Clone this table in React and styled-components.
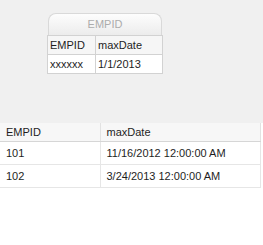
import React from "react";
import styled, { createGlobalStyle } from "styled-components";

const sample = [{ id: "xxxxxx", date: "1/1/2013" }];

const results = [
  { id: "101", date: "11/16/2012 12:00:00 AM" },
  { id: "102", date: "3/24/2013 12:00:00 AM" },
];

const App = () => {
  return (
    <>
      <GlobalStyle />
      <Designer>
        <Card>
          <CardTitle>EMPID</CardTitle>
          <CardTable>
            <thead>
              <tr>
                <CardHead>EMPID</CardHead>
                <CardHead>maxDate</CardHead>
              </tr>
            </thead>
            <tbody>
              {sample.map((row) => (
                <tr key={row.id}>
                  <CardCell>{row.id}</CardCell>
                  <CardCell>{row.date}</CardCell>
                </tr>
              ))}
            </tbody>
          </CardTable>
        </Card>
      </Designer>
      <Grid>
        <thead>
          <tr>
            <GridHead $width={100}>EMPID</GridHead>
            <GridHead>maxDate</GridHead>
          </tr>
        </thead>
        <tbody>
          {results.map((row) => (
            <tr key={row.id}>
              <GridCell>{row.id}</GridCell>
              <GridCell>{row.date}</GridCell>
            </tr>
          ))}
        </tbody>
      </Grid>
    </>
  );
};

const GlobalStyle = createGlobalStyle`
  body {
    margin: 0;
    background: #fff;
    font-family: "Liberation Sans", Arial, sans-serif;
    font-size: 11px;
    color: #1e1e1e;
  }
`;

const Designer = styled.div`
  height: 123px;
  box-sizing: border-box;
  padding: 13px 0 0 47px;
  background: #f0f0f0;
`;

const Card = styled.div`
  width: 116px;
  display: flex;
  flex-direction: column;
`;

const CardTitle = styled.div`
  margin: 0 1px;
  height: 21px;
  line-height: 21px;
  text-align: center;
  color: #acacac;
  border: 1px solid #d9d9d9;
  border-bottom: none;
  border-radius: 8px 8px 0 0;
  background: linear-gradient(#fdfdfd, #ececec);
`;

const CardTable = styled.table`
  width: 116px;
  border-collapse: collapse;
  background: #fff;
  border: 1px solid #d2d2d2;
`;

const CardHead = styled.th`
  height: 18px;
  padding: 0 2px;
  text-align: left;
  font-weight: normal;
  background: #f6f6f6;
  border: 1px solid #d2d2d2;
  &:first-child {
    width: 43px;
  }
`;

const CardCell = styled.td`
  height: 18px;
  padding: 0 2px;
  border: 1px solid #d2d2d2;
`;

const Grid = styled.table`
  width: 261px;
  border-collapse: collapse;
  border-right: 1px solid #e2e2e2;
`;

const GridHead = styled.th`
  width: ${(p) => (p.$width ? `${p.$width}px` : "auto")};
  height: 18px;
  padding: 0 6px;
  box-sizing: border-box;
  text-align: left;
  font-weight: normal;
  background: #f7f7f7;
  border-bottom: 1px solid #d6d6d6;
  border-right: 1px solid #e2e2e2;
`;

const GridCell = styled.td`
  height: 22px;
  padding: 0 6px;
  border-bottom: 1px solid #e6e6e6;
  border-right: 1px solid #e6e6e6;
`;

export default App;
